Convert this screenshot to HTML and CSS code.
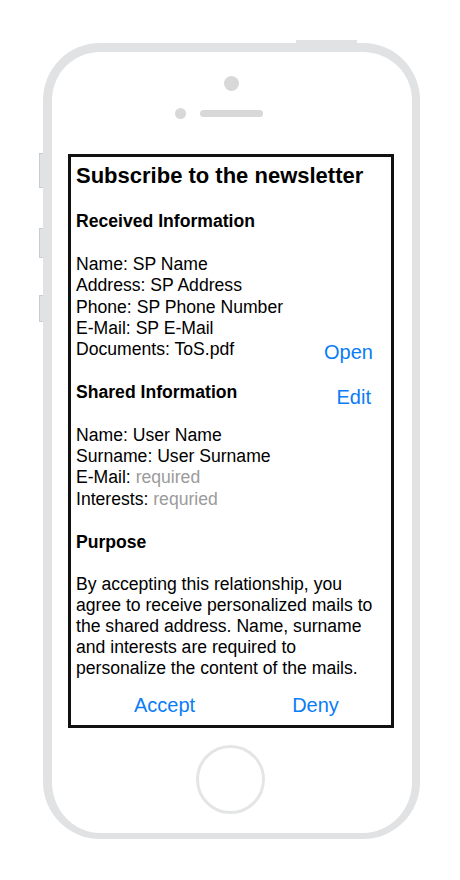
FILE: index.html
```html
<!DOCTYPE html>
<html lang="en">
<head>
<meta charset="utf-8">
<title>Subscribe to the newsletter</title>
<link rel="stylesheet" href="styles.css">
</head>
<body>
<div class="phone">
  <span class="btn-top"></span>
  <span class="btn-side btn-mute"></span>
  <span class="btn-side btn-vol-up"></span>
  <span class="btn-side btn-vol-down"></span>
  <div class="camera"></div>
  <div class="speaker-row"><span class="sensor"></span><span class="speaker"></span></div>
  <div class="screen">
    <h1 class="title">Subscribe to the newsletter</h1>
    <h2 class="heading">Received Information</h2>
    <ul class="info">
      <li>Name: SP Name</li>
      <li>Address: SP Address</li>
      <li>Phone: SP Phone Number</li>
      <li>E-Mail: SP E-Mail</li>
      <li class="row"><span>Documents: ToS.pdf</span><a class="link link-open">Open</a></li>
    </ul>
    <div class="row section-head"><h2 class="heading heading-inline">Shared Information</h2><a class="link link-edit">Edit</a></div>
    <ul class="info">
      <li>Name: User Name</li>
      <li>Surname: User Surname</li>
      <li>E-Mail: <span class="placeholder">required</span></li>
      <li>Interests: <span class="placeholder">requried</span></li>
    </ul>
    <h2 class="heading">Purpose</h2>
    <p class="purpose">By accepting this relationship, you agree to receive personalized mails to the shared address. Name, surname and interests are required to personalize the content of the mails.</p>
    <div class="actions"><a class="action">Accept</a><a class="action">Deny</a></div>
  </div>
  <div class="home"></div>
</div>
</body>
</html>
```
FILE: styles.css
```css
html, body {
  margin: 0;
  padding: 0;
  background: #ffffff;
}

body {
  font-family: "Liberation Sans", Arial, sans-serif;
  color: #000;
  padding: 43px 0 0 43px;
}

.phone {
  position: relative;
  box-sizing: border-box;
  width: 377px;
  height: 796px;
  border-style: solid;
  border-color: #e1e2e3;
  border-width: 9px 8px 6px 9px;
  border-radius: 57px;
  display: flex;
  flex-direction: column;
  align-items: flex-start;
}

.btn-top {
  position: absolute;
  top: -12px;
  left: 244px;
  width: 61px;
  height: 3px;
  background: #e1e2e3;
}

.btn-side {
  position: absolute;
  left: -13px;
  width: 4px;
  box-sizing: border-box;
  background: #e1e2e3;
  border: 1px solid #cbcccd;
  border-right: 0;
}

.btn-mute { top: 101px; height: 35px; }
.btn-vol-up { top: 176px; height: 30px; }
.btn-vol-down { top: 243px; height: 27px; }

.camera {
  margin: 23.5px 0 0 171.5px;
  width: 15px;
  height: 15px;
  border-radius: 50%;
  background: #d8d8d8;
}

.speaker-row {
  display: flex;
  align-items: center;
  gap: 14px;
  margin: 17px 0 0 122.5px;
  height: 11px;
}

.sensor {
  width: 11px;
  height: 11px;
  border-radius: 50%;
  background: #d8d8d8;
}

.speaker {
  width: 63px;
  height: 7px;
  border-radius: 4px;
  background: #d8d8d8;
}

.screen {
  box-sizing: border-box;
  width: 326px;
  height: 574px;
  margin: 35px 0 0 16px;
  border: 3px solid #111;
  padding: 6px 5px 5px;
  display: flex;
  flex-direction: column;
}

.title {
  margin: 0;
  font-size: 22px;
  line-height: 26.4px;
  font-weight: bold;
}

.heading {
  margin: 22.2px 0 0;
  font-size: 17.6px;
  line-height: 21.2px;
  font-weight: bold;
}

.heading-inline {
  margin: 0;
}

.info {
  list-style: none;
  margin: 21.8px 0 0;
  padding: 0;
  font-size: 17.6px;
  line-height: 21.2px;
}

.row {
  display: flex;
  justify-content: space-between;
  align-items: flex-start;
}

.section-head {
  margin-top: 21.8px;
}

.link {
  color: #0a7cf6;
  font-size: 20px;
  line-height: 21.2px;
}

.link-open {
  margin: 3.5px 13px -3.5px 0;
}

.link-edit {
  margin: 5.5px 15px -5.5px 0;
}

.placeholder {
  color: #9b9b9b;
}

.purpose {
  margin: 20.5px 0 0;
  font-size: 17.6px;
  line-height: 21.2px;
}

.actions {
  display: flex;
  gap: 97px;
  margin-top: 13px;
  padding-left: 58px;
}

.action {
  color: #0a7cf6;
  font-size: 20px;
  line-height: 24px;
}

.home {
  box-sizing: border-box;
  width: 69px;
  height: 69px;
  margin: 17.5px 0 0 143.5px;
  border: 3px solid #e4e5e6;
  border-radius: 50%;
}
```
